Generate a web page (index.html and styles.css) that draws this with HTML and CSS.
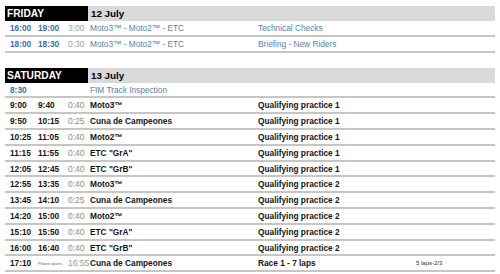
FILE: index.html
```html
<!DOCTYPE html>
<html>
<head>
<meta charset="utf-8">
<link rel="stylesheet" href="styles.css">
</head>
<body>
<section class="day">
  <div class="day-head"><div class="day-name">FRIDAY</div><div class="day-date">12 July</div></div>
  <div class="row blue"><span class="t">16:00</span><span class="t">19:00</span><span class="d">3:00</span><span class="ev">Moto3™ - Moto2™ - ETC</span><span class="ds">Technical Checks</span><span class="x"></span></div>
  <div class="row blue"><span class="t">18:00</span><span class="t">18:30</span><span class="d">0:30</span><span class="ev">Moto3™ - Moto2™ - ETC</span><span class="ds">Briefing - New Riders</span><span class="x"></span></div>
</section>
<section class="day">
  <div class="day-head"><div class="day-name">SATURDAY</div><div class="day-date">13 July</div></div>
  <div class="row blue"><span class="t">8:30</span><span class="t"></span><span class="d"></span><span class="ev">FIM Track Inspection</span><span class="ds"></span><span class="x"></span></div>
  <div class="row"><span class="t">9:00</span><span class="t">9:40</span><span class="d">0:40</span><span class="ev">Moto3™</span><span class="ds">Qualifying practice 1</span><span class="x"></span></div>
  <div class="row"><span class="t">9:50</span><span class="t">10:15</span><span class="d">0:25</span><span class="ev">Cuna de Campeones</span><span class="ds">Qualifying practice 1</span><span class="x"></span></div>
  <div class="row"><span class="t">10:25</span><span class="t">11:05</span><span class="d">0:40</span><span class="ev">Moto2™</span><span class="ds">Qualifying practice 1</span><span class="x"></span></div>
  <div class="row"><span class="t">11:15</span><span class="t">11:55</span><span class="d">0:40</span><span class="ev">ETC "GrA"</span><span class="ds">Qualifying practice 1</span><span class="x"></span></div>
  <div class="row"><span class="t">12:05</span><span class="t">12:45</span><span class="d">0:40</span><span class="ev">ETC "GrB"</span><span class="ds">Qualifying practice 1</span><span class="x"></span></div>
  <div class="row"><span class="t">12:55</span><span class="t">13:35</span><span class="d">0:40</span><span class="ev">Moto3™</span><span class="ds">Qualifying practice 2</span><span class="x"></span></div>
  <div class="row"><span class="t">13:45</span><span class="t">14:10</span><span class="d">0:25</span><span class="ev">Cuna de Campeones</span><span class="ds">Qualifying practice 2</span><span class="x"></span></div>
  <div class="row"><span class="t">14:20</span><span class="t">15:00</span><span class="d">0:40</span><span class="ev">Moto2™</span><span class="ds">Qualifying practice 2</span><span class="x"></span></div>
  <div class="row"><span class="t">15:10</span><span class="t">15:50</span><span class="d">0:40</span><span class="ev">ETC "GrA"</span><span class="ds">Qualifying practice 2</span><span class="x"></span></div>
  <div class="row"><span class="t">16:00</span><span class="t">16:40</span><span class="d">0:40</span><span class="ev">ETC "GrB"</span><span class="ds">Qualifying practice 2</span><span class="x"></span></div>
  <div class="row"><span class="t">17:10</span><span class="tiny">Pitlane opens</span><span class="d lite">16:55</span><span class="ev">Cuna de Campeones</span><span class="ds">Race 1 - 7 laps</span><span class="x">5 laps-2/3</span></div>
</section>
</body>
</html>
```
FILE: styles.css
```css
html, body {
  margin: 0;
  padding: 0;
  background: #fff;
}
body {
  font-family: "Liberation Sans", Arial, sans-serif;
  width: 500px;
  height: 274px;
  overflow: hidden;
}
.day {
  margin: 6px 5px 0 5px;
  width: 490px;
}
.day + .day {
  margin-top: 15px;
}
.day-head {
  display: flex;
  height: 15px;
  background: #d9d9d9;
  font-weight: bold;
  font-size: 9.8px;
  line-height: 16px;
}
.day-name {
  width: 81px;
  padding-left: 2px;
  background: #000;
  color: #fff;
  font-size: 10.2px;
}
.day-date {
  padding-left: 3px;
  color: #000;
}
.row {
  display: grid;
  grid-template-columns: 28px 30px 22px 168px 158px 1fr;
  padding-left: 5px;
  height: 13.8px;
  line-height: 15px;
  border-bottom: 2px solid #c6c6c6;
  font-size: 8.3px;
  font-weight: bold;
  color: #141414;
  white-space: nowrap;
}
.row .d {
  font-weight: normal;
  color: #8c8c8c;
  font-size: 8.5px;
}
.row .x {
  font-weight: normal;
  font-size: 6px;
  color: #333;
}
.row .tiny {
  font-weight: normal;
  font-size: 4px;
  color: #666;
}
.row .d.lite {
  color: #9a9a9a;
}
.row.blue .t {
  color: #3a70ad;
}
.row.blue .d {
  color: #8f9fb4;
}
.row.blue .ev,
.row.blue .ds {
  font-weight: normal;
  color: #5782b3;
}
```
